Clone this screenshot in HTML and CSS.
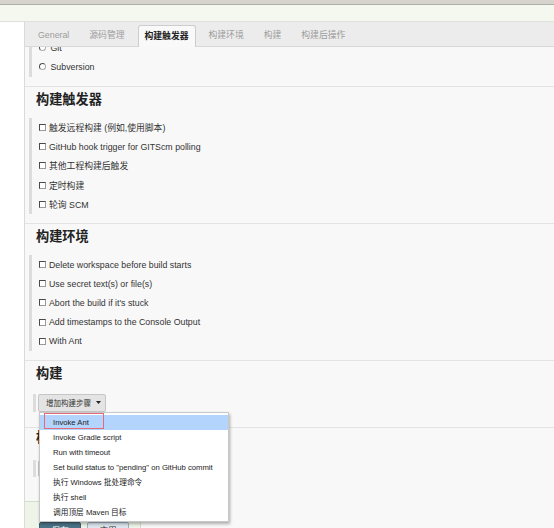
FILE: index.html
```html
<!DOCTYPE html>
<html lang="zh">
<head>
<meta charset="utf-8">
<title>Jenkins 配置</title>
<link rel="stylesheet" href="styles.css">
</head>
<body>
<div class="topstrip"></div>
<div class="infobar"></div>
<div class="main">
  <div class="side"></div>
  <div class="panel">
    <div class="tabs">
      <div class="tab">General</div>
      <div class="tab">源码管理</div>
      <div class="tab active">构建触发器</div>
      <div class="tab">构建环境</div>
      <div class="tab">构建</div>
      <div class="tab">构建后操作</div>
    </div>
    <div class="content">
      <div class="scroll">
        <div class="optlist scm">
          <div class="opt"><span class="rd"></span><span>Git</span></div>
          <div class="opt"><span class="rd"></span><span>Subversion</span></div>
        </div>

        <div class="section">
          <h2>构建触发器</h2>
          <div class="optlist">
            <div class="opt"><span class="cb"></span><span>触发远程构建 (例如,使用脚本)</span></div>
            <div class="opt"><span class="cb"></span><span>GitHub hook trigger for GITScm polling</span></div>
            <div class="opt"><span class="cb"></span><span>其他工程构建后触发</span></div>
            <div class="opt"><span class="cb"></span><span>定时构建</span></div>
            <div class="opt"><span class="cb"></span><span>轮询 SCM</span></div>
          </div>
        </div>

        <div class="section">
          <h2>构建环境</h2>
          <div class="optlist">
            <div class="opt"><span class="cb"></span><span>Delete workspace before build starts</span></div>
            <div class="opt"><span class="cb"></span><span>Use secret text(s) or file(s)</span></div>
            <div class="opt"><span class="cb"></span><span>Abort the build if it's stuck</span></div>
            <div class="opt"><span class="cb"></span><span>Add timestamps to the Console Output</span></div>
            <div class="opt"><span class="cb"></span><span>With Ant</span></div>
          </div>
        </div>

        <div class="section build">
          <h2>构建</h2>
          <div class="stepbar">
            <div class="addbtn"><span>增加构建步骤</span><svg class="caret" width="5" height="3" viewBox="0 0 5 3"><path d="M0 0H5L2.5 3Z" fill="#222"/></svg></div>
            <ul class="menu">
              <li class="hl"><span class="mark"></span>Invoke Ant</li>
              <li>Invoke Gradle script</li>
              <li>Run with timeout</li>
              <li>Set build status to "pending" on GitHub commit</li>
              <li>执行 Windows 批处理命令</li>
              <li>执行 shell</li>
              <li>调用顶层 Maven 目标</li>
            </ul>
          </div>
        </div>

        <div class="section post">
          <h2>构建后操作</h2>
          <div class="stepbar post-bar">
            <div class="addbtn wide"><span>增加构建后操作步骤</span><svg class="caret" width="5" height="3" viewBox="0 0 5 3"><path d="M0 0H5L2.5 3Z" fill="#222"/></svg></div>
          </div>
        </div>

        <div class="bottombar">
          <button class="btn save">保存</button>
          <button class="btn apply">应用</button>
        </div>
      </div>
    </div>
  </div>
</div>
</body>
</html>
```
FILE: styles.css
```css
html, body {
  margin: 0;
  height: 528px;
  overflow: hidden;
}
body {
  font-family: "Liberation Sans", "Noto Sans CJK SC", sans-serif;
  font-size: 8.8px;
  color: #333;
  background: #fff;
}
.topstrip {
  height: 4px;
  background: #d7d3cd;
  border-bottom: 1px solid #b1aea8;
}
.infobar {
  height: 16px;
  background: #f5f8ef;
  border-bottom: 1px solid #e0e0e0;
}
.main {
  display: flex;
  height: 506px;
}
.side {
  width: 24px;
  background: #fff;
}
.panel {
  flex: 1;
  min-width: 0;
  border-left: 1px solid #dadada;
  background: #f8f8f8;
  display: flex;
  flex-direction: column;
}
.tabs {
  display: flex;
  align-items: flex-end;
  gap: 6px;
  height: 24px;
  padding-left: 6px;
  background: #ececec;
  border-bottom: 1px solid #d8d8d8;
  flex: none;
}
.tab {
  height: 21px;
  line-height: 21px;
  padding: 0 7px;
  color: #9c9c9c;
  white-space: nowrap;
}
.tab.active {
  background: #f9f9f9;
  border: 1px solid #cdcdcd;
  border-bottom: none;
  border-radius: 3px 3px 0 0;
  padding: 0 6px;
  margin-bottom: -1px;
  line-height: 20px;
  color: #222;
  font-weight: bold;
}
.content {
  flex: 1;
  overflow: hidden;
}
.scroll {
  margin-top: -9px;
}
.optlist {
  margin-left: 4px;
  border-left: 3px solid #dcdcdc;
}
.opt {
  height: 19.2px;
  display: flex;
  align-items: center;
  gap: 4px;
  padding-left: 7px;
  white-space: nowrap;
}
.cb {
  width: 7px;
  height: 7px;
  box-sizing: border-box;
  border: 1px solid #4a4a4a;
  border-right-color: #9a9a9a;
  border-bottom-color: #9a9a9a;
  background: #fff;
  flex: none;
}
.opt .cb + span {
  margin-left: -1px;
}
.rd {
  width: 7px;
  height: 7px;
  box-sizing: border-box;
  border: 1px solid #4a4a4a;
  border-right-color: #aaa;
  border-bottom-color: #aaa;
  border-radius: 50%;
  background: #fff;
  flex: none;
  margin-right: 0.5px;
}
.scm {
  padding-bottom: 0.6px;
  margin-bottom: 9px;
}
.section {
  border-top: 1px solid #e3e3e3;
  padding: 3px 0 9px;
}
.section h2 {
  margin: 0;
  padding-left: 11px;
  font-size: 13.2px;
  line-height: 20px;
  font-weight: bold;
  color: #222;
  white-space: nowrap;
}
.section .optlist {
  margin-top: 8px;
}
.section.build {
  padding-bottom: 15px;
}
.section.post {
  padding: 0 0 24px;
}
.stepbar {
  position: relative;
  display: flex;
  margin: 10px 0 0 8px;
  padding-left: 2px;
  border-left: 3px solid #dcdcdc;
}
.post-bar {
  margin-top: 12px;
}
.addbtn {
  height: 18px;
  box-sizing: border-box;
  width: 68px;
  display: flex;
  align-items: center;
  gap: 5px;
  padding-left: 7px;
  border: 1px solid #c6c6c6;
  border-radius: 2px;
  background: #e4e4e4;
  font-size: 7.5px;
  color: #333;
  white-space: nowrap;
}
.addbtn.wide {
  width: 96px;
  height: 17px;
}
.caret {
  flex: none;
}
.menu {
  position: absolute;
  left: 3px;
  top: 100%;
  z-index: 10;
  width: 190px;
  box-sizing: border-box;
  margin: 0;
  padding: 2px 0 1px;
  list-style: none;
  background: #fff;
  border: 1px solid #c8c8c8;
  box-shadow: 1px 2px 3px rgba(0, 0, 0, 0.3);
  font-size: 7.7px;
  color: #222;
}
.menu li {
  position: relative;
  height: 15px;
  line-height: 15px;
  padding-left: 13px;
  white-space: nowrap;
}
.menu li.hl {
  background: #b3d4fc;
}
.mark {
  position: absolute;
  left: 4px;
  top: -2px;
  width: 60px;
  height: 16px;
  box-sizing: border-box;
  border: 1px solid #e26b77;
}
.bottombar {
  width: 116px;
  height: 40px;
  box-sizing: border-box;
  padding: 20px 0 0 14px;
  display: flex;
  gap: 6px;
  background: #eef4e8;
  border-top: 1px solid #d3ddca;
  border-right: 1px solid #d3ddca;
}
.btn {
  width: 42px;
  height: 18px;
  box-sizing: border-box;
  font-family: inherit;
  font-size: 8.8px;
  padding: 0;
  border-radius: 2px;
}
.btn.save {
  background: #4b7387;
  border: 1px solid #3c5e70;
  color: #fff;
}
.btn.apply {
  background: #dde6ef;
  border: 1px solid #9db0c3;
  color: #333;
}
```
